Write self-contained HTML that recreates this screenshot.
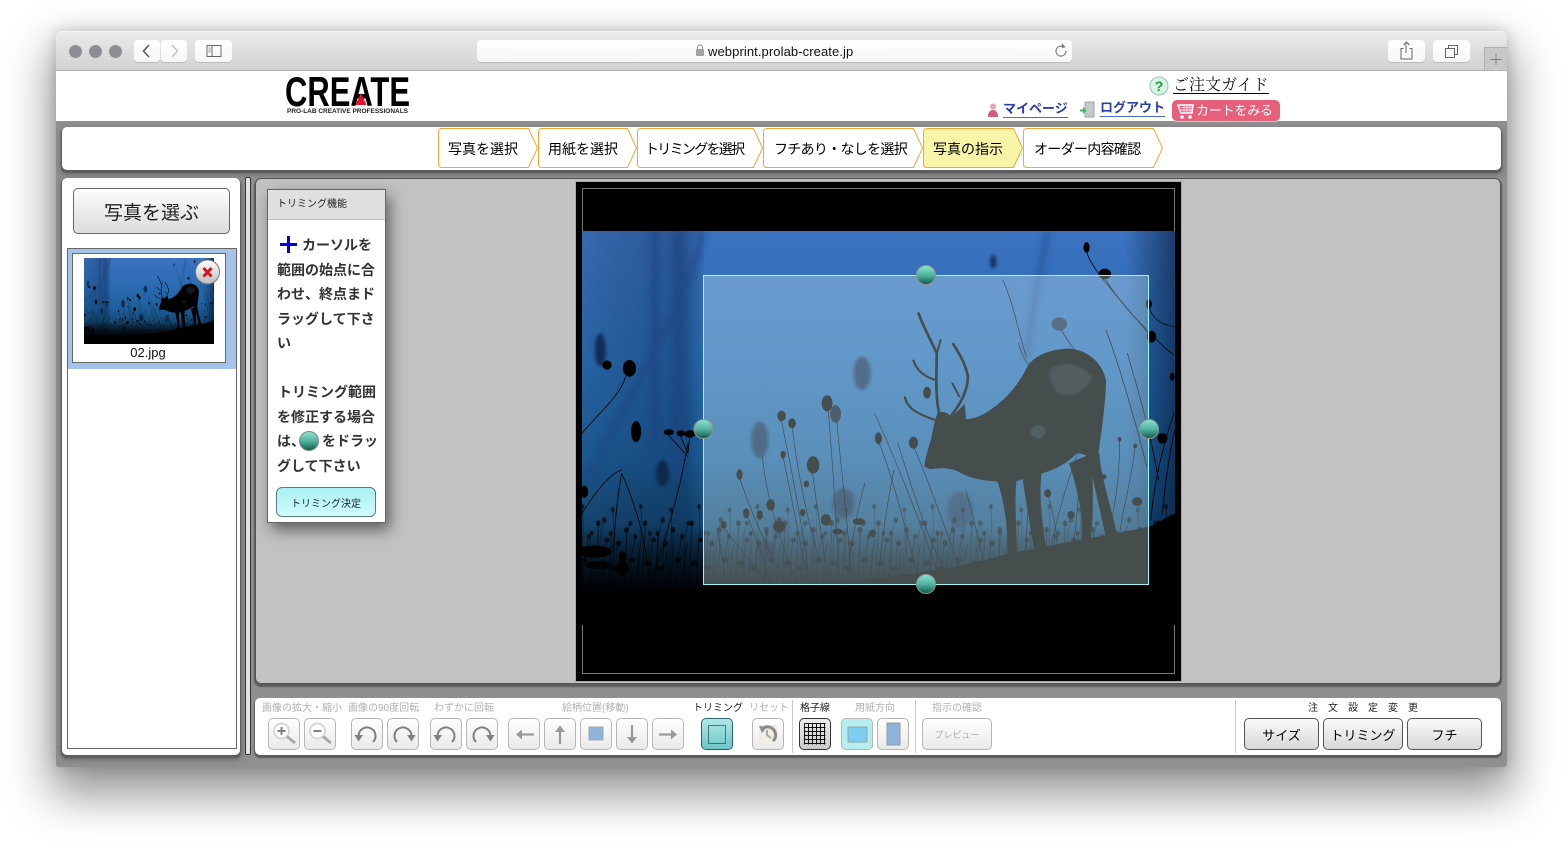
<!DOCTYPE html>
<html lang="ja"><head><meta charset="utf-8"><title>webprint.prolab-create.jp</title>
<style>
*{box-sizing:border-box}
html,body{margin:0;padding:0;width:1563px;height:847px;overflow:hidden;background:#fff}
body{position:relative;font-family:"Liberation Sans","Noto Sans CJK JP",sans-serif;color:#000}
.a,.t,.b{position:absolute}
.t{white-space:nowrap;line-height:14px}
#win{left:56px;top:31px;width:1451px;height:736px;border-radius:5px 5px 3px 3px;background:#8f8f8f;box-shadow:0 22px 45px 6px rgba(0,0,0,.42),0 0 14px rgba(0,0,0,.18)}
#bar{left:56px;top:31px;width:1451px;height:40px;border-radius:5px 5px 0 0;background:linear-gradient(#ebebeb,#d1d1d1);border-bottom:1px solid #b1b1b1;border-top:1px solid #f5f5f5}
.dot{width:13px;height:13px;border-radius:50%;background:#8f8d94;top:45px}
.cb{top:40px;height:22px;background:linear-gradient(#fff,#f6f6f6);border-radius:4px;box-shadow:0 1px 0 #bdbdbd}
.pn{background:#fff;border-radius:5px;box-shadow:0 2px 1px 1px #5c5c5c,0 3px 4px 2px #707070}
.b{top:718px;width:32px;height:32px;border:1px solid #b5b5b5;border-radius:5px;background:linear-gradient(#fff,#e9e9e9)}
.b svg{position:absolute;left:-1px;top:-1px;width:32px;height:32px}
.l{font-size:10px;color:#b0b0b0;top:702px}
.o{top:718px;height:32px;border:1px solid #555;border-radius:5px;background:linear-gradient(#fafafa,#d8d8d8);font-size:13px;text-align:center;line-height:33px}
.ln{font-size:14px;font-weight:700;color:#333;line-height:20px;left:277px;white-space:nowrap}
.st{font-size:14px;top:142px}
</style></head><body>
<div class="a" id="win"></div>
<div class="a" id="bar"></div>
<div class="a dot" style="left:69px"></div><div class="a dot" style="left:89px"></div><div class="a dot" style="left:109px"></div>
<div class="a cb" style="left:134px;width:26px"><svg width="26" height="22"><path d="M15 5L9.500 11L15 17" fill="none" stroke="#555" stroke-width="1.500"/></svg></div>
<div class="a cb" style="left:161px;width:26px"><svg width="26" height="22"><path d="M11 5L16.500 11L11 17" fill="none" stroke="#c4c4c4" stroke-width="1.500"/></svg></div>
<div class="a cb" style="left:195px;width:37px"><svg width="37" height="22"><rect x="12" y="5.500" width="14" height="11" fill="none" stroke="#666"/><path d="M17 5.500V16.500" stroke="#666"/><path d="M13.500 8h2M13.500 10h2M13.500 12h2" stroke="#888"/></svg></div>
<div class="a cb" style="left:477px;width:595px"><svg width="595" height="22"><rect x="219" y="9" width="8" height="7" rx="1" fill="#a2a2a2"/><path d="M220.500 9V7.500a2.500 2.500 0 0 1 5 0V9" fill="none" stroke="#a2a2a2" stroke-width="1.200"/><path d="M587.500 7.500a5 5 0 1 0 1.500 3.500" fill="none" stroke="#777" stroke-width="1.100"/><path d="M585 3.500l3.500 3.500-3.800 1z" fill="#777"/></svg></div>
<div class="t" style="left:708px;top:45px;font-size:13px;color:#111;letter-spacing:.09px">webprint.prolab-create.jp</div>
<div class="a cb" style="left:1388px;width:37px"><svg width="37" height="22"><path d="M14 8.500h-2.500V19h11V8.500H20M16.500 13V3M14 5l3-3 3 3" transform="translate(1.500 0)" fill="none" stroke="#666"/></svg></div>
<div class="a cb" style="left:1433px;width:37px"><svg width="37" height="22"><rect x="12.500" y="8.500" width="9" height="9" fill="none" stroke="#666"/><path d="M15.500 8.500V5.500h9v9h-3" fill="none" stroke="#666"/></svg></div>
<div class="a" style="left:1484px;top:47px;width:23px;height:23px;background:#c8c8c8;border:1px solid #b0b0b0;border-right:0;border-bottom:0"><svg width="22" height="22"><path d="M11 6V17M5.500 11.500H16.500" stroke="#808080"/></svg></div>

<div class="a" style="left:56px;top:71px;width:1451px;height:50px;background:#fff"></div>
<svg class="a" style="left:280px;top:72px" width="136" height="46"><text x="5" y="34" font-family="Liberation Sans" font-weight="700" font-size="42" textLength="125" lengthAdjust="spacingAndGlyphs" fill="#000">CREATE</text><path d="M81 21L86.500 33H75.500z" fill="#e8102a"/><text x="7" y="41" font-family="Liberation Sans" font-weight="700" font-size="6.500" textLength="121" lengthAdjust="spacingAndGlyphs" fill="#222">PRO-LAB CREATIVE PROFESSIONALS</text></svg>

<svg class="a" style="left:1148px;top:75px" width="22" height="22"><circle cx="11" cy="11" r="9" fill="#d8f2e6" stroke="#8fc7b0"/><text x="11" y="16" text-anchor="middle" font-family="Liberation Sans" font-weight="700" font-size="14" fill="#1f9a35">?</text></svg>
<div class="t" style="left:1173px;top:76px;font-family:'Liberation Serif','Noto Serif CJK JP',serif;font-size:16px;line-height:20px;border-bottom:1px solid #000;height:18px;color:#111">ご注文ガイド</div>
<svg class="a" style="left:985px;top:101px" width="16" height="18"><circle cx="8" cy="5.500" r="3" fill="#eaa4b4"/><path d="M3 16c0-5 2-7 5-7s5 2 5 7z" fill="#d45a80"/></svg>
<div class="t" style="left:1003px;top:102px;font-size:13px;font-weight:700;color:#2a3cae;border-bottom:1px solid #4c68d0;height:16px">マイページ</div>
<svg class="a" style="left:1079px;top:100px" width="18" height="18"><rect x="6" y="2" width="9" height="15" fill="#c3cbc8" stroke="#9aa5a2"/><path d="M1 9.500h3V7l3.500 3.500L4 14v-2.500H1z" fill="#3fb36e"/></svg>
<div class="t" style="left:1100px;top:101px;font-size:13px;font-weight:700;color:#2a3cae;border-bottom:1px solid #4c68d0;height:16px">ログアウト</div>
<div class="a" style="left:1172px;top:100px;width:108px;height:21px;border-radius:5px;background:#e85f7b;box-shadow:0 1px 0 #bfe0d8"></div>
<svg class="a" style="left:1176px;top:102px" width="20" height="18"><path d="M2 3h15l-1 8H5z" fill="none" stroke="#fff" stroke-width="1.500"/><path d="M5 5.500h11M5 8h11M8 3v8M11 3v8M14 3v8" stroke="#fff" stroke-width=".8"/><circle cx="6" cy="15" r="1.800" fill="#fff"/><circle cx="14" cy="15" r="1.800" fill="#fff"/></svg>
<div class="t" style="left:1196px;top:104px;font-size:13px;color:#fff;letter-spacing:-.2px">カートをみる</div>

<div class="a pn" style="left:62px;top:127px;width:1439px;height:43px"></div>
<svg class="a" style="left:430px;top:124px" width="745" height="48" fill="#fff" stroke="#f2a63a">
<path d="M11.500 4.500H98.500L107.500 24L98.500 43.500H11.500a3 3 0 0 1-3-3V7.500a3 3 0 0 1 3-3z"/>
<path d="M111.500 4.500H197.500L206.500 24L197.500 43.500H111.500a3 3 0 0 1-3-3V7.500a3 3 0 0 1 3-3z"/>
<path d="M210.500 4.500H323.500L332.500 24L323.500 43.500H210.500a3 3 0 0 1-3-3V7.500a3 3 0 0 1 3-3z"/>
<path d="M336.500 4.500H483.500L492.500 24L483.500 43.500H336.500a3 3 0 0 1-3-3V7.500a3 3 0 0 1 3-3z"/>
<path d="M496.500 4.500H583.500L592.500 24L583.500 43.500H496.500a3 3 0 0 1-3-3V7.500a3 3 0 0 1 3-3z" fill="#f8f4a8"/>
<path d="M596.500 4.500H723.500L732.500 24L723.500 43.500H596.500a3 3 0 0 1-3-3V7.500a3 3 0 0 1 3-3z"/>
</svg>
<div class="t st" style="left:448px">写真を選択</div>
<div class="t st" style="left:548px">用紙を選択</div>
<div class="t st" style="left:645px;letter-spacing:-1.700px">トリミングを選択</div>
<div class="t st" style="left:774px;letter-spacing:-.7px">フチあり・なしを選択</div>
<div class="t st" style="left:933px">写真の指示</div>
<div class="t st" style="left:1034px;letter-spacing:-.7px">オーダー内容確認</div>

<div class="a pn" style="left:62px;top:178px;width:178px;height:577px"></div>
<div class="a" style="left:67px;top:248px;width:170px;height:501px;border:1px solid #666;background:#fff"></div>
<div class="a" style="left:73px;top:188px;width:157px;height:46px;border:1px solid #666;border-radius:5px;background:linear-gradient(#fdfdfd,#dcdcdc);text-align:center;font-size:19px;line-height:50px;color:#222">写真を選ぶ</div>
<div class="a" style="left:68px;top:249px;width:168px;height:120px;background:#a5c3ea"></div>
<div class="a" style="left:72px;top:253px;width:154px;height:110px;background:#fff;border:1px solid #666"></div>
<svg class="a" style="left:84px;top:258px" width="130" height="86" viewBox="582 231 593 394" preserveAspectRatio="none"><use href="#photo"/></svg>
<div class="t" style="left:71px;width:154px;text-align:center;top:346px;font-size:13px;color:#111">02.jpg</div>
<svg class="a" style="left:194px;top:259px" width="27" height="27"><defs><linearGradient id="dg" x1="0" y1="0" x2="0" y2="1"><stop offset="0" stop-color="#fff"/><stop offset="1" stop-color="#bdbdbd"/></linearGradient></defs><circle cx="13.500" cy="13" r="12" fill="url(#dg)" stroke="#777"/><path d="M9.500 9l8 8.500M17.500 9l-8 8.500" stroke="#d8161c" stroke-width="3"/></svg>

<div class="a" style="left:245px;top:177px;width:6px;height:578px;background:#e4e4e4;border:1px solid #333;border-radius:2px"></div>

<div class="a" style="left:255px;top:178px;width:1246px;height:506px;background:#c2c2c2;border:1px solid #555;border-radius:6px;box-shadow:0 2px 1px 1px #5c5c5c"></div>

<div class="a" style="left:267px;top:189px;width:119px;height:334px;background:#fff;border:1px solid #666;box-shadow:4px 7px 14px rgba(0,0,0,.5)"></div>
<div class="a" style="left:268px;top:190px;width:117px;height:30px;background:#dfdfdf;border-bottom:1px solid #bbb"></div>
<div class="t" style="left:277px;top:198px;font-size:10px;color:#222">トリミング機能</div>
<svg class="a" style="left:280px;top:236px" width="18" height="17"><path d="M0 8.500H17M8.500 0V17" stroke="#0000e6" stroke-width="3"/></svg>
<div class="a ln" style="left:302px;top:235px">カーソルを</div>
<div class="a ln" style="top:260px">範囲の始点に合</div>
<div class="a ln" style="top:284px">わせ、終点まド</div>
<div class="a ln" style="top:309px">ラッグして下さ</div>
<div class="a ln" style="top:333px">い</div>
<div class="a ln" style="left:278px;top:382px">トリミング範囲</div>
<div class="a ln" style="top:407px">を修正する場合</div>
<div class="a ln" style="top:431px">は、</div>
<svg class="a" style="left:298px;top:430px" width="22" height="22"><defs><linearGradient id="gb" x1="0" y1="0" x2="0" y2="1"><stop offset="0" stop-color="#8fe2d0"/><stop offset=".5" stop-color="#55b4a2"/><stop offset="1" stop-color="#0f5a48"/></linearGradient></defs><circle cx="11" cy="11" r="9.500" fill="url(#gb)" stroke="#7a8a85"/></svg>
<div class="a ln" style="left:322px;top:431px">をドラッ</div>
<div class="a ln" style="top:456px">グして下さい</div>
<div class="a" style="left:276px;top:487px;width:100px;height:30px;border:1px solid #5b7a80;border-radius:6px;background:linear-gradient(#a8f0f2,#cffcfc);text-align:center;font-size:10px;line-height:33px;color:#223">トリミング決定</div>

<div class="a" style="left:576px;top:182px;width:605px;height:499px;background:#000;box-shadow:0 0 0 1px #aaa"></div>
<div class="a" style="left:582px;top:188px;width:593px;height:486px;border:1px solid #777"></div>
<svg class="a" style="left:0;top:0" width="1563" height="847">
<defs>
<linearGradient id="sky" x1="0" y1="0" x2="0" y2="1"><stop offset="0" stop-color="#3c72bf"/><stop offset=".33" stop-color="#2a6cb2"/><stop offset=".58" stop-color="#1e5f9c"/><stop offset=".74" stop-color="#164a76"/><stop offset=".86" stop-color="#0a2a44"/><stop offset=".95" stop-color="#010408"/><stop offset="1" stop-color="#000"/></linearGradient>
<linearGradient id="lf" x1="0" y1="0" x2="1" y2="0"><stop offset="0" stop-color="#000" stop-opacity=".08"/><stop offset=".5" stop-color="#00102a" stop-opacity=".22"/><stop offset=".85" stop-color="#00102a" stop-opacity=".28"/><stop offset="1" stop-color="#00102a" stop-opacity=".05"/></linearGradient>
<linearGradient id="rt" x1="0" y1="0" x2="1" y2="0"><stop offset="0" stop-color="#00102a" stop-opacity="0"/><stop offset="1" stop-color="#00102a" stop-opacity=".55"/></linearGradient>
<linearGradient id="gd" x1="0" y1="0" x2="0" y2="1"><stop offset="0" stop-color="#000" stop-opacity="0"/><stop offset=".6" stop-color="#000" stop-opacity=".55"/><stop offset="1" stop-color="#000"/></linearGradient>
<filter id="b1" x="-50%" y="-50%" width="200%" height="200%"><feGaussianBlur stdDeviation="4"/></filter>
<filter id="b2" x="-50%" y="-50%" width="200%" height="200%"><feGaussianBlur stdDeviation="9"/></filter>
<clipPath id="pc"><rect x="582" y="231" width="593" height="394"/></clipPath>
<pattern id="gr" x="0" y="1020" width="120" height="200" patternUnits="userSpaceOnUse">
<g fill="none" stroke="#000" stroke-width="2"><path d="M5 200C8 130 15 80 12 30M22 200C18 140 28 90 35 50M38 200C42 150 40 100 50 70M55 200C50 130 62 60 60 10M72 200C78 150 70 100 82 60M88 200C84 140 95 100 92 40M104 200C110 160 100 90 112 70M115 200C112 150 118 110 116 90"/></g>
<g fill="#000"><ellipse cx="12" cy="30" rx="6" ry="9"/><ellipse cx="35" cy="50" rx="5" ry="8"/><ellipse cx="60" cy="10" rx="6" ry="9"/><ellipse cx="82" cy="60" rx="7" ry="7"/><ellipse cx="92" cy="40" rx="5" ry="8"/><ellipse cx="112" cy="70" rx="7" ry="9"/><ellipse cx="25" cy="120" rx="9" ry="8"/><ellipse cx="66" cy="130" rx="11" ry="8"/><ellipse cx="100" cy="145" rx="10" ry="7"/></g>
</pattern>
<pattern id="gr2" x="47" y="960" width="150" height="260" patternUnits="userSpaceOnUse">
<g fill="none" stroke="#000" stroke-width="1.600"><path d="M8 260C20 190 10 120 28 60M45 260C40 190 58 110 50 30M80 260C90 190 76 120 95 70M118 260C110 200 130 110 122 20M140 260C146 210 136 150 146 100"/></g>
<g fill="#000"><ellipse cx="28" cy="60" rx="6" ry="9"/><ellipse cx="50" cy="30" rx="5" ry="8"/><ellipse cx="95" cy="70" rx="6" ry="8"/><ellipse cx="122" cy="20" rx="5" ry="8"/><ellipse cx="146" cy="100" rx="5" ry="7"/></g>
</pattern>
<g id="photo" clip-path="url(#pc)">
<rect x="582" y="231" width="593" height="394" fill="url(#sky)"/>
<rect x="582" y="231" width="122" height="394" fill="url(#lf)"/>
<rect x="1125" y="231" width="50" height="394" fill="url(#rt)"/>
<g transform="translate(575 180) scale(.389 .3333)">
<g filter="url(#b2)" fill="none" stroke="#1a4280" opacity=".6">
<path d="M205 150V800" stroke-width="22"/><path d="M265 150V900" stroke-width="30"/>
<path d="M330 150C300 320 200 520 30 900" stroke-width="16"/>
<path d="M1215 150C1190 320 1170 420 1160 540" stroke-width="12"/>
</g>
<g filter="url(#b1)" fill="#0c1f3c" opacity=".75">
<ellipse cx="738" cy="580" rx="22" ry="50"/><ellipse cx="475" cy="780" rx="22" ry="55"/><ellipse cx="690" cy="970" rx="28" ry="45"/><ellipse cx="990" cy="990" rx="32" ry="55" opacity=".7"/><ellipse cx="1075" cy="245" rx="8" ry="20"/><ellipse cx="65" cy="510" rx="14" ry="50"/><ellipse cx="225" cy="880" rx="16" ry="40"/><ellipse cx="490" cy="1110" rx="20" ry="30"/><ellipse cx="525" cy="1040" rx="16" ry="25"/>
</g>
<rect x="0" y="1040" width="1545" height="220" fill="url(#gd)"/>
<rect x="0" y="960" width="1545" height="260" fill="url(#gr2)" opacity=".6"/>
<rect x="0" y="1020" width="1545" height="200" fill="url(#gr)" opacity=".7"/>
<g fill="#000">
<path d="M898 860C900 835 908 805 916 775C920 750 925 720 932 700C945 690 958 700 968 710L1002 672L1005 718C1035 715 1060 700 1095 665C1130 630 1150 590 1165 555C1185 525 1225 507 1270 506C1320 510 1355 550 1365 600C1365 670 1352 760 1345 830C1330 840 1310 820 1290 820C1265 850 1235 870 1200 880L1130 905C1080 905 1030 905 985 875C960 860 930 865 912 868Z"/>
<path d="M1085 900L1135 900C1128 980 1138 1060 1135 1130L1112 1130C1112 1060 1110 990 1085 900Z"/>
<path d="M1150 890L1200 875C1190 950 1205 1060 1215 1130L1182 1130C1175 1060 1160 980 1150 890Z"/>
<path d="M1270 850L1330 820C1330 900 1335 1000 1325 1090L1300 1090C1310 1010 1290 920 1270 850Z"/>
<path d="M1320 820L1348 820C1350 880 1375 970 1395 1070L1365 1075C1350 990 1330 900 1320 820Z"/>
<path d="M0 1240C120 1232 240 1226 330 1218C500 1220 640 1212 780 1195C900 1178 1000 1160 1100 1125C1200 1100 1330 1075 1475 1040C1500 1030 1520 1010 1545 1000V1520H0z"/>
</g>
<path d="M1222 565C1265 535 1310 560 1330 590C1325 625 1280 660 1240 640C1225 620 1215 590 1222 565z" fill="#12181c" filter="url(#b1)"/>
<g fill="none" stroke="#000" stroke-linecap="round" stroke-linejoin="round">
<g stroke-width="7">
<path d="M936 700C925 640 930 570 930 520C915 480 895 440 883 400" stroke-width="7"/>
<path d="M930 520L940 480" stroke-width="5"/><path d="M928 600C895 590 878 570 870 542" stroke-width="6"/>
<path d="M925 720C890 705 855 690 848 652" stroke-width="6"/>
<path d="M968 705C990 675 1010 630 1010 590C1005 555 990 525 972 492" stroke-width="7"/>
<path d="M988 650L970 610" stroke-width="5"/>
</g>
<g stroke-width="2.200">
<path d="M1315 215C1325 260 1380 330 1430 400C1470 450 1510 500 1540 525"/>
<path d="M1365 300C1400 370 1450 420 1480 470"/>
<path d="M1475 380C1485 420 1510 435 1540 440"/>
<path d="M130 590C115 650 60 700 18 760"/>
<path d="M290 790C280 860 265 960 200 1190"/><path d="M240 765L290 830"/><path d="M270 765L290 820"/><path d="M295 770L290 820"/>
<path d="M120 880C100 1000 100 1120 90 1330"/><path d="M120 880C150 960 180 1060 190 1190"/>
<path d="M18 1000C50 940 90 880 120 870"/>
<path d="M1480 1020C1490 900 1510 800 1540 700"/><path d="M1510 1000C1520 880 1530 800 1545 740"/>
<path d="M1365 450C1400 560 1440 720 1470 860"/>
<path d="M1420 520C1450 640 1480 760 1500 900"/>
</g>
<g stroke-width="1.800">
<path d="M530 720C550 830 580 1000 600 1180"/><path d="M558 740C570 860 600 1050 640 1180"/><path d="M650 680C660 800 670 1000 680 1190"/><path d="M672 710C680 830 700 1000 710 1190"/>
<path d="M770 700C810 800 880 1000 930 1170"/><path d="M782 790C820 900 850 1050 880 1180"/><path d="M830 790C860 900 900 1060 950 1170"/><path d="M870 800C910 900 950 1050 990 1160"/>
<path d="M422 890C450 990 500 1120 540 1210"/><path d="M482 830C490 950 530 1090 570 1210"/><path d="M535 830C555 950 580 1090 600 1210"/><path d="M610 870C620 980 640 1100 650 1200"/>
<path d="M380 1040C420 1100 460 1160 500 1210"/><path d="M365 1045C375 1110 385 1170 390 1210"/><path d="M440 1000C470 1080 490 1160 500 1210"/>
<path d="M1400 780C1400 880 1390 980 1370 1060"/><path d="M1440 800C1430 900 1410 980 1400 1060"/><path d="M1300 900C1290 960 1290 1040 1280 1100"/><path d="M1215 940C1230 1000 1240 1060 1240 1110"/>
<path d="M1005 930C1020 1000 1040 1080 1050 1150"/><path d="M1330 720C1290 800 1240 1000 1220 1120"/><path d="M1190 780C1170 900 1160 1020 1160 1120"/>
<path d="M745 910C725 990 710 1100 700 1190"/><path d="M820 870C800 980 790 1080 780 1180"/><path d="M1100 300C1130 380 1140 460 1160 530"/><path d="M1140 490C1150 530 1160 545 1170 560"/><path d="M1245 440C1260 470 1270 490 1285 510"/>
</g>
</g>
<g fill="#000">
<ellipse cx="1315" cy="202" rx="8" ry="16"/><ellipse cx="1362" cy="282" rx="16" ry="16"/><ellipse cx="1475" cy="372" rx="8" ry="14"/><ellipse cx="1482" cy="470" rx="12" ry="18"/><ellipse cx="1510" cy="775" rx="13" ry="16"/><ellipse cx="1535" cy="590" rx="6" ry="12"/>
<ellipse cx="140" cy="565" rx="17" ry="25"/><ellipse cx="157" cy="755" rx="13" ry="32"/><ellipse cx="241" cy="757" rx="13" ry="9"/><ellipse cx="272" cy="760" rx="11" ry="9"/><ellipse cx="295" cy="762" rx="14" ry="11"/><ellipse cx="82" cy="555" rx="12" ry="14"/><ellipse cx="24" cy="935" rx="10" ry="18"/><ellipse cx="50" cy="1115" rx="45" ry="18"/><ellipse cx="60" cy="1155" rx="35" ry="12"/><ellipse cx="122" cy="1165" rx="16" ry="22"/><ellipse cx="122" cy="1130" rx="10" ry="16"/>
<ellipse cx="531" cy="708" rx="11" ry="16"/><ellipse cx="558" cy="730" rx="10" ry="15"/><ellipse cx="648" cy="670" rx="14" ry="24"/><ellipse cx="670" cy="702" rx="14" ry="26" fill="#0b1a2c"/><ellipse cx="780" cy="775" rx="9" ry="18"/><ellipse cx="870" cy="788" rx="12" ry="18"/><ellipse cx="423" cy="884" rx="8" ry="16"/><ellipse cx="612" cy="855" rx="16" ry="26"/><ellipse cx="535" cy="824" rx="7" ry="12"/><ellipse cx="905" cy="638" rx="10" ry="18"/><ellipse cx="1245" cy="432" rx="20" ry="20" fill="#1c3352"/>
<ellipse cx="440" cy="1000" rx="8" ry="15"/><ellipse cx="503" cy="975" rx="11" ry="17"/><ellipse cx="382" cy="1035" rx="8" ry="11"/><ellipse cx="475" cy="1005" rx="8" ry="14"/><ellipse cx="585" cy="998" rx="7" ry="11"/><ellipse cx="525" cy="1040" rx="15" ry="17"/><ellipse cx="595" cy="912" rx="7" ry="10"/><ellipse cx="645" cy="1020" rx="13" ry="17"/><ellipse cx="730" cy="1025" rx="16" ry="10"/><ellipse cx="675" cy="1055" rx="13" ry="9"/><ellipse cx="765" cy="1060" rx="9" ry="11"/><ellipse cx="1190" cy="755" rx="18" ry="20" fill="#141c20"/><ellipse cx="1215" cy="940" rx="9" ry="12"/><ellipse cx="1400" cy="778" rx="5" ry="7"/><ellipse cx="1440" cy="798" rx="5" ry="7"/><ellipse cx="1445" cy="965" rx="13" ry="13"/><ellipse cx="1360" cy="890" rx="6" ry="8"/><ellipse cx="1275" cy="1005" rx="9" ry="12"/>
</g>
</g>
</g>
</defs>
<use href="#photo"/>
<rect x="703.500" y="275.500" width="445" height="309" fill="#e6ffff" fill-opacity=".3" stroke="#9ff4f6"/>
<g stroke="#8a938c" fill="url(#gb)"><circle cx="926" cy="275" r="9.500"/><circle cx="926" cy="584" r="9.500"/><circle cx="703.500" cy="429" r="9.500"/><circle cx="1149" cy="429" r="9.500"/></g>
</svg>

<div class="a pn" style="left:255px;top:698px;width:1246px;height:57px;box-shadow:0 2px 1px 1px #5c5c5c"></div>
<div class="a" style="left:792px;top:700px;width:1px;height:53px;background:#ccc"></div>
<div class="a" style="left:915px;top:700px;width:1px;height:53px;background:#ccc"></div>
<div class="a" style="left:1235px;top:700px;width:1px;height:53px;background:#ccc"></div>
<div class="t l" style="left:262px">画像の拡大・縮小</div>
<div class="t l" style="left:348px">画像の90度回転</div>
<div class="t l" style="left:434px">わずかに回転</div>
<div class="t l" style="left:562px">絵柄位置(移動)</div>
<div class="t l" style="left:693px;color:#222">トリミング</div>
<div class="t l" style="left:749px">リセット</div>
<div class="t l" style="left:800px;color:#222">格子線</div>
<div class="t l" style="left:855px">用紙方向</div>
<div class="t l" style="left:932px">指示の確認</div>
<div class="t l" style="left:1308px;color:#222;letter-spacing:10px">注文設定変更</div>

<svg width="0" height="0" style="position:absolute"><defs>
<path id="und" d="M22 24A8.500 8.500 0 1 0 7.500 18" fill="none" stroke="#7f7f7f" stroke-width="2"/>
<path id="unh" d="M3.500 17L12 17L7.500 23.500z" fill="#7f7f7f"/>
</defs></svg>
<div class="b" style="left:268px"><svg viewBox="0 0 32 32"><circle cx="13.500" cy="13" r="7.500" fill="#fff" stroke="#d8d8d8" stroke-width="2"/><path d="M9.500 13h8M13.500 9v8" stroke="#808080" stroke-width="2"/><path d="M19 18.500L27 25" stroke="#a8a8a8" stroke-width="3"/></svg></div>
<div class="b" style="left:304px"><svg viewBox="0 0 32 32"><circle cx="13.500" cy="13" r="7.500" fill="#fff" stroke="#d8d8d8" stroke-width="2"/><path d="M9.500 13h8" stroke="#808080" stroke-width="2"/><path d="M19 18.500L27 25" stroke="#a8a8a8" stroke-width="3"/></svg></div>
<div class="b" style="left:351px"><svg viewBox="0 0 32 32"><use href="#und"/><use href="#unh"/></svg></div>
<div class="b" style="left:387px"><svg viewBox="0 0 32 32"><g transform="matrix(-1 0 0 1 32 0)"><use href="#und"/><use href="#unh"/></g></svg></div>
<div class="b" style="left:430px"><svg viewBox="0 0 32 32"><use href="#und"/><use href="#unh"/></svg></div>
<div class="b" style="left:466px"><svg viewBox="0 0 32 32"><g transform="matrix(-1 0 0 1 32 0)"><use href="#und"/><use href="#unh"/></g></svg></div>
<div class="b" style="left:508px"><svg viewBox="0 0 32 32"><path d="M26 16.500H13" stroke="#999" stroke-width="2.200"/><path d="M8 16.500L14 11.500V21.500z" fill="#999"/></svg></div>
<div class="b" style="left:544px"><svg viewBox="0 0 32 32"><path d="M16 26V13" stroke="#999" stroke-width="2.200"/><path d="M16 7.500L11 14H21z" fill="#999"/></svg></div>
<div class="b" style="left:580px"><svg viewBox="0 0 32 32"><rect x="9" y="9" width="14" height="13" fill="#8fb3dc" stroke="#a5a5a5"/></svg></div>
<div class="b" style="left:616px"><svg viewBox="0 0 32 32"><path d="M16 7V20" stroke="#999" stroke-width="2.200"/><path d="M16 25.500L11 19H21z" fill="#999"/></svg></div>
<div class="b" style="left:652px"><svg viewBox="0 0 32 32"><path d="M7 16.500H20" stroke="#999" stroke-width="2.200"/><path d="M25 16.500L19 11.500V21.500z" fill="#999"/></svg></div>
<div class="b" style="left:701px;border-color:#2a6468;background:linear-gradient(#ade9e6,#6ec6c6)"><svg viewBox="0 0 32 32"><rect x="7.500" y="7.500" width="17" height="18" fill="none" stroke="#111" stroke-dasharray="1 1" shape-rendering="crispEdges"/></svg></div>
<div class="b" style="left:752px"><svg viewBox="0 0 32 32"><rect x="7" y="7" width="18" height="18" fill="#f0ede6"/><path d="M21 23A8 8 0 1 0 10 11" fill="none" stroke="#8a8a8a" stroke-width="3"/><path d="M7 8L15 9L10 15z" fill="#8a8a8a"/><path d="M15 12V17L19 20" fill="none" stroke="#aaa" stroke-width="2"/></svg></div>
<div class="b" style="left:799px;border-color:#333;background:linear-gradient(#eee,#ccc)"><svg viewBox="0 0 32 32"><path d="M5.500 5.500V26.500M9.500 5.500V26.500M13.500 5.500V26.500M17.500 5.500V26.500M21.500 5.500V26.500M25.500 5.500V26.500M5.500 5.500H26.500M5.500 9.500H26.500M5.500 13.500H26.500M5.500 17.500H26.500M5.500 21.500H26.500M5.500 25.500H26.500" stroke="#111" fill="none"/></svg></div>
<div class="b" style="left:841px;background:#b6eeee"><svg viewBox="0 0 32 32"><rect x="7" y="9" width="19" height="15" fill="#7fcdf3" stroke="#8aa"/></svg></div>
<div class="b" style="left:877px"><svg viewBox="0 0 32 32"><rect x="10" y="5" width="13" height="22" fill="#8fb3dc" stroke="#999"/></svg></div>
<div class="b" style="left:922px;width:70px;font-size:9px;color:#aaa;text-align:center;line-height:32px">プレビュー</div>
<div class="a o" style="left:1244px;width:75px">サイズ</div>
<div class="a o" style="left:1323px;width:80px">トリミング</div>
<div class="a o" style="left:1407px;width:75px">フチ</div>
</body></html>
